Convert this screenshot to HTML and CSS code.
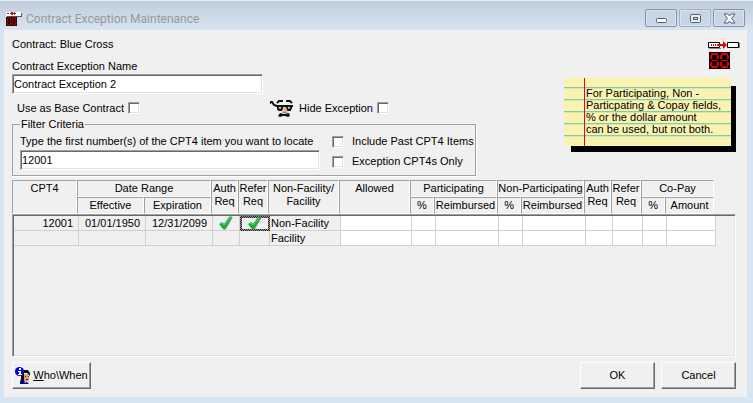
FILE: index.html
```html
<!DOCTYPE html>
<html lang="en">
<head>
  <meta charset="UTF-8">
  <title>Contract Exception Maintenance</title>
  <link rel="stylesheet" href="styles.css">
</head>
<body>

  <!-- Shared shapes -->
  <svg class="defs" width="0" height="0" aria-hidden="true">
    <symbol id="digit" viewBox="0 0 10 17" preserveAspectRatio="none">
      <rect width="10" height="17" fill="#000"/>
      <path d="M2 1h6v2H2zM1 3h2v4H1zM7 3h2v4H7zM2 8h6v1H2zM1 10h2v4H1zM7 10h2v4H7zM2 14h6v2H2z" fill="#e00000"/>
    </symbol>
    <symbol id="check" viewBox="0 0 14 14">
      <path d="M1 9l3-2 2 2 5-7 3-1-7 12-2 1z" fill="#7b8a7b"/>
      <path d="M0 8l3-2 2 2 5-7 3-1-7 12-2 1z" fill="#12b234"/>
      <path d="M1 8l2-1 2 2 6-7" fill="none" stroke="#3fe060"/>
    </symbol>
  </svg>

  <div class="window">
    <header class="titlebar">
      <svg class="app-icon" width="16" height="14" viewBox="0 0 16 14" aria-hidden="true">
        <path d="M0 0h15v4H0z" fill="#fff"/>
        <path d="M15 1h1v3h-1zM1 4h15v1H1zM5 0h1v3H5zM8 0h1v3H8z" fill="#555"/>
        <path d="M1 1h2v1H1zM4 1h6v1H4zM6 0h1v3H6z" fill="#e00000"/>
        <use href="#digit" x="0" y="5" width="6" height="9"/>
        <use href="#digit" x="5" y="5" width="6" height="9"/>
      </svg>
      <h1>Contract Exception Maintenance</h1>
      <div class="window-buttons">
        <button type="button" aria-label="Minimize">
          <svg width="13" height="11" viewBox="0 0 13 11"><rect x="1.5" y="5.5" width="10" height="4" rx="1" fill="#fff" stroke="#565c70"/></svg>
        </button>
        <button type="button" aria-label="Maximize" class="dim">
          <svg width="13" height="11" viewBox="0 0 13 11"><rect x="1.5" y="1.5" width="10" height="8" rx="1" fill="#eee" stroke="#565c70"/><rect x="4.5" y="4.5" width="4" height="2" fill="#c5d3e2" stroke="#565c70"/></svg>
        </button>
        <button type="button" aria-label="Close">
          <svg width="13" height="11" viewBox="0 0 13 11"><path d="M1 1h4l1.500 2L8 1h4L8.500 5.500 12 10H8L6.500 8 5 10H1l3.500-4.500z" fill="#fff" stroke="#565c70"/></svg>
        </button>
      </div>
    </header>

    <main class="content">
      <div class="top">
        <form class="fields">
          <p class="contract">Contract: Blue Cross</p>
          <label class="name-label" for="exceptionName">Contract Exception Name</label>
          <input class="text name-input" type="text" id="exceptionName" value="Contract Exception 2">

          <div class="options">
            <label for="baseContract">Use as Base Contract</label>
            <input class="tick" type="checkbox" id="baseContract">
            <svg class="disguise" width="24" height="17" viewBox="0 0 24 17" aria-hidden="true">
              <path d="M0 4V2h2l2 3 3 1" fill="none" stroke="#111" stroke-width="2"/>
              <path d="M7 3l2-2h4M16 1h4l2 2" fill="none" stroke="#111" stroke-width="2"/>
              <path d="M6 5h17v2H6z" fill="#111"/>
              <path d="M8 6h4v3l-1 1H9L8 9zM17 6h4v2l-1 2h-2l-1-1z" fill="#999" stroke="#111" stroke-width="2"/>
              <path d="M9 7h2v1H9zM18 7h2v1h-2z" fill="#ddd"/>
              <path d="M13 7h3l2 6h-6z" fill="#e9b09b"/>
              <path d="M8 16l2-3 4 1 5-1 1 3-2 1-3-1h-2l-3 1z" fill="#111"/>
              <path d="M13 12h3v1h-3z" fill="#b56d5e"/>
            </svg>
            <label for="hideException">Hide Exception</label>
            <input class="tick" type="checkbox" id="hideException">
          </div>

          <fieldset class="filter">
            <legend>Filter Criteria</legend>
            <div class="search">
              <label for="cptSearch">Type the first number(s) of the CPT4 item you want to locate</label>
              <input class="text" type="text" id="cptSearch" value="12001">
            </div>
            <div class="filter-ticks">
              <div class="tick-row">
                <input class="tick" type="checkbox" id="includePast">
                <label for="includePast">Include Past CPT4 Items</label>
              </div>
              <div class="tick-row">
                <input class="tick" type="checkbox" id="exceptionOnly">
                <label for="exceptionOnly">Exception CPT4s Only</label>
              </div>
            </div>
          </fieldset>
        </form>

        <aside class="side">
          <svg class="transfer" width="32" height="28" viewBox="0 0 32 28" aria-hidden="true">
            <path d="M1 7h12v1H1zM20 7h12V2h-1v5z" fill="#888"/>
            <path d="M.5 1.500h11v5H.5zM19.500 1.500h11v5h-11z" fill="#fff" stroke="#000"/>
            <path d="M3 3h1v2H3zM5 3h1v2H5zM7 3h1v2H7zM9 3h6V0l4 4-4 4V5H9z" fill="#f00000"/>
            <use href="#digit" x="1" y="11" width="11" height="17"/>
            <use href="#digit" x="11" y="11" width="11" height="17"/>
          </svg>
          <p class="note">For Participating, Non -<br>Particpating &amp; Copay fields,<br>% or the dollar amount<br>can be used, but not both.</p>
        </aside>
      </div>

      <div class="grid">
        <table class="grid-head">
          <colgroup>
            <col class="c-code"><col class="c-date"><col class="c-date"><col class="c-auth"><col class="c-refer">
            <col class="c-place"><col class="c-place"><col class="c-pct"><col class="c-sum"><col class="c-pct"><col class="c-sum">
            <col class="c-auth"><col class="c-refer"><col class="c-pct"><col class="c-amount"><col>
          </colgroup>
          <thead>
            <tr>
              <th rowspan="2">CPT4</th>
              <th colspan="2">Date Range</th>
              <th rowspan="2">Auth<br>Req</th>
              <th rowspan="2">Refer<br>Req</th>
              <th rowspan="2">Non-Facility/<br>Facility</th>
              <th rowspan="2">Allowed</th>
              <th colspan="2">Participating</th>
              <th colspan="2">Non-Participating</th>
              <th rowspan="2">Auth<br>Req</th>
              <th rowspan="2">Refer<br>Req</th>
              <th colspan="2">Co-Pay</th>
              <td rowspan="2"></td>
            </tr>
            <tr>
              <th>Effective</th>
              <th>Expiration</th>
              <th>%</th>
              <th>Reimbursed</th>
              <th>%</th>
              <th>Reimbursed</th>
              <th>%</th>
              <th>Amount</th>
            </tr>
          </thead>
        </table>

        <div class="grid-body">
          <table>
            <colgroup>
              <col class="c-code"><col class="c-date"><col class="c-date"><col class="c-auth"><col class="c-refer">
              <col class="c-place"><col class="c-place"><col class="c-pct"><col class="c-sum"><col class="c-pct"><col class="c-sum">
              <col class="c-auth"><col class="c-refer"><col class="c-pct"><col class="c-amount"><col>
            </colgroup>
            <tbody>
              <tr>
                <td class="code">12001</td>
                <td class="date">01/01/1950</td>
                <td class="date">12/31/2099</td>
                <td class="mark"><svg width="14" height="14" role="img" aria-label="Yes"><use href="#check"/></svg></td>
                <td class="mark current"><svg width="14" height="14" role="img" aria-label="Yes"><use href="#check"/></svg></td>
                <td>Non-Facility</td>
                <td class="open"></td><td class="open"></td><td class="open"></td><td class="open"></td><td class="open"></td>
                <td class="open"></td><td class="open"></td><td class="open"></td><td class="open"></td>
                <td class="rest"></td>
              </tr>
              <tr>
                <td></td><td></td><td></td><td></td><td></td>
                <td>Facility</td>
                <td class="open"></td><td class="open"></td><td class="open"></td><td class="open"></td><td class="open"></td>
                <td class="open"></td><td class="open"></td><td class="open"></td><td class="open"></td>
                <td class="rest"></td>
              </tr>
            </tbody>
          </table>
        </div>
      </div>

      <footer class="actions">
        <button type="button" class="who">
          <svg width="15" height="17" viewBox="0 0 15 17" aria-hidden="true">
            <path d="M6 5l3-2h4l2 3v3l-3-3H9v7l1 2H5l1-3z" fill="#111"/>
            <path d="M9 7h3l2 2v4l-2 2h-2l-1-2z" fill="#d8a27c"/>
            <path d="M10 9h1v1h-1zM13 9h1v1h-1zM11 12h2v1h-2z" fill="#511"/>
            <path d="M5 15l4-1 1 2 2-1 2 2H5z" fill="#0000a8"/>
            <circle cx="4.500" cy="4.500" r="4.500" fill="#0000e0"/>
            <path d="M4 1h2v2H4zM3 4h3v3h1v1H3V7h1V5H3z" fill="#fff"/>
          </svg>
          <span><u>W</u>ho\When</span>
        </button>
        <button type="button" class="push">OK</button>
        <button type="button" class="push">Cancel</button>
      </footer>
    </main>
  </div>

</body>
</html>
```
FILE: styles.css
```css
* {
  box-sizing: border-box;
}

body {
  margin: 0;
  font-family: "Liberation Sans", Arial, sans-serif;
  font-size: 11px;
  line-height: 13px;
  color: #000;
}

p, h1 {
  margin: 0;
}

input, button {
  font: inherit;
  color: inherit;
}

.defs {
  position: absolute;
}

.window {
  display: flex;
  flex-direction: column;
  min-height: 100vh;
  padding: 0 6px 6px 4px;
  background-color: #d7e4f2;
}

/* Title bar */
.titlebar {
  display: flex;
  align-items: flex-start;
  height: 30px;
  margin: 0 -6px 0 -4px;
  padding: 8px 8px 0 6px;
  border-top: 1px solid #e4ebf3;
  background: linear-gradient(#bfcddb, #d7e4f2);
}

.app-icon {
  margin-top: 3px;
}

.titlebar h1 {
  flex: 1;
  margin-left: 4px;
  font-family: Roboto, sans-serif;
  font-size: 12px;
  font-weight: normal;
  line-height: 20px;
  color: #999;
}

.window-buttons {
  display: flex;
  gap: 2px;
}

.window-buttons button {
  display: flex;
  align-items: center;
  justify-content: center;
  width: 32px;
  height: 18px;
  padding: 0;
  border: 1px solid #8591a8;
  border-radius: 2px;
  background-color: #c7d5e4;
  box-shadow: inset 0 0 0 1px #d9e4ef;
}

.window-buttons .dim {
  border-color: #a3b1c4;
}

/* Content */
.content {
  flex: 1;
  display: flex;
  flex-direction: column;
  padding: 8px 11px 8px 8px;
  background-color: #f0f0f0;
}

.top {
  display: flex;
  justify-content: space-between;
  align-items: flex-start;
}

.fields {
  width: 464px;
}

.name-label {
  display: block;
  margin-top: 9px;
}

.text {
  display: block;
  height: 20px;
  padding: 0 1px;
  border: 1px solid;
  border-color: #a0a0a0 #fff #fff #a0a0a0;
  border-radius: 0;
  background-color: #fff;
  box-shadow: inset 1px 1px #696969, inset -1px -1px #e3e3e3;
}

.name-input {
  width: 251px;
  margin-top: 1px;
}

.options {
  display: flex;
  align-items: center;
  height: 17px;
  margin-top: 6px;
  padding-left: 5px;
}

.tick {
  appearance: none;
  width: 12px;
  height: 12px;
  margin: 0;
  border: 1px solid;
  border-color: #a0a0a0 #fff #fff #a0a0a0;
  background-color: #fff;
  box-shadow: inset 1px 1px #696969, inset -1px -1px #e3e3e3;
}

.options .tick {
  margin: 0 0 2px 4px;
}

.disguise {
  margin: 0 5px 0 130px;
}

.filter {
  display: flex;
  gap: 12px;
  margin: 1px 0 0;
  padding: 4px 1px 5px 7px;
  border: 1px solid #a0a0a0;
  box-shadow: 1px 1px #fff;
}

.filter legend {
  padding: 0 1px;
}

.search {
  flex: 0 0 300px;
}

.search .text {
  width: 100%;
  margin-top: 2px;
}

.filter-ticks {
  display: flex;
  flex-direction: column;
  gap: 7px;
}

.tick-row {
  display: flex;
  align-items: center;
  gap: 8px;
  white-space: nowrap;
}

.side {
  display: flex;
  flex-direction: column;
  align-items: flex-end;
  padding: 3px 5px 0 0;
}

.transfer {
  margin-right: -9px;
}

/* Ruled paper */
.note {
  width: 167px;
  margin-top: 9px;
  padding: 9px 0 11px 22px;
  line-height: 12px;
  white-space: nowrap;
  background:
    linear-gradient(#f00020, #f00020) 20px 0 / 1px 100% no-repeat,
    linear-gradient(#faf3b0 9px, #7dccae 9px, #7dccae 10px, #d9e6ae 10px, #d9e6ae 11px, #faf3b0 11px) 0 0 / 100% 12px;
  box-shadow: 6px 7px 0 -1px #000;
}

/* Exception grid */
.grid {
  flex: 1;
  display: flex;
  flex-direction: column;
  margin-top: 4px;
}

table {
  width: 100%;
  table-layout: fixed;
  border-spacing: 0;
}

.c-code { width: 65px; }
.c-date { width: 67px; }
.c-auth { width: 27px; }
.c-refer { width: 30px; }
.c-place { width: 71px; }
.c-pct { width: 24px; }
.c-sum { width: 63px; }
.c-amount { width: 49px; }

.grid-head th {
  height: 17px;
  padding: 1px 0 0;
  border: 1px solid;
  border-color: #a0a0a0 #fff #fff #a0a0a0;
  font-weight: normal;
  text-align: center;
  vertical-align: top;
  white-space: nowrap;
}

.grid-head td {
  padding: 0;
}

.grid-body {
  flex: 1;
  border: 1px solid;
  border-color: #a0a0a0 #fff #fff #a0a0a0;
  box-shadow: inset 1px 1px #696969, inset -1px -1px #e3e3e3;
  padding: 1px;
}

.grid-body td {
  height: 15px;
  padding: 0 0 0 1px;
  border-right: 1px solid #d0d0d0;
  border-bottom: 1px solid #d0d0d0;
  white-space: nowrap;
}

.grid-body .code {
  padding-right: 5px;
  text-align: right;
}

.grid-body .date {
  text-align: center;
}

.grid-body .mark {
  padding: 0;
  text-align: center;
}

.mark svg {
  display: block;
  margin: 0 auto;
}

/* Checkered focus frame round the selected cell */
.grid-body .current {
  border-color: transparent;
  background:
    linear-gradient(#f0f0f0, #f0f0f0) center / calc(100% - 3px) calc(100% - 3px) no-repeat,
    repeating-conic-gradient(#222 0 25%, #999 0 50%) 0 0 / 2px 2px;
}

.grid-body .open {
  background-color: #fff;
}

.grid-body .rest {
  border: none;
}

/* Bottom buttons */
.actions {
  display: flex;
  gap: 6px;
  margin-top: 5px;
}

.actions button {
  display: flex;
  align-items: center;
  justify-content: center;
  height: 27px;
  padding: 0;
  border: 1px solid;
  border-color: #fff #696969 #696969 #fff;
  background-color: #f0f0f0;
  box-shadow: inset -1px -1px #a0a0a0;
}

.actions .who {
  gap: 3px;
  width: 79px;
  margin-right: auto;
}

.actions .push {
  width: 75px;
}
```
